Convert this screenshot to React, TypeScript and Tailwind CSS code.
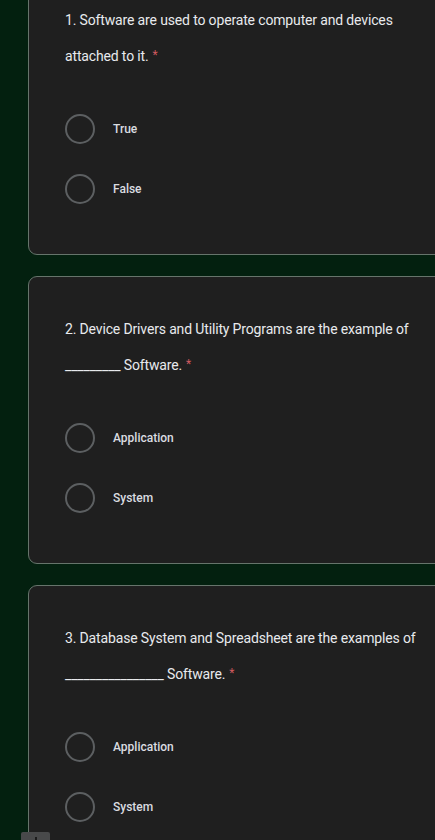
import React from "react";

type Q = { q1: string; q2: React.ReactNode; opts: string[] };

const questions: Q[] = [
  {
    q1: "1. Software are used to operate computer and devices",
    q2: <>attached to it.</>,
    opts: ["True", "False"],
  },
  {
    q1: "2. Device Drivers and Utility Programs are the example of",
    q2: <>_________ Software.</>,
    opts: ["Application", "System"],
  },
  {
    q1: "3. Database System and Spreadsheet are the examples of",
    q2: <>________________ Software.</>,
    opts: ["Application", "System"],
  },
];

function Card({ q }: { q: Q }) {
  return (
    <div className="w-[420px] shrink-0 rounded-[9px] border border-[#66746b] bg-[#1f1f1f] pl-[36px] pt-[34px] pb-[35px]">
      <div
        className="text-[14px] leading-[36px] tracking-[-0.15px] text-[#e8eaed]"
        style={{ fontFamily: 'Roboto, "Open Sans", sans-serif' }}
      >
        <div className="h-[36px] whitespace-nowrap">{q.q1}</div>
        <div className="h-[36px] whitespace-nowrap">
          {q.q2}
          <span className="relative top-[-2px] ml-[4px] text-[12px] leading-none text-[#cf5a5f]">*</span>
        </div>
      </div>
      <div className="mt-[25px] flex flex-col">
        {q.opts.map((o) => (
          <div key={o} className="flex h-[60px] items-center">
            <div className="h-[30px] w-[30px] rounded-full border-2 border-[#5c5f61]" />
            <span
              className="ml-[18px] text-[12px] font-medium text-[#dadce0]"
              style={{ fontFamily: "Roboto, sans-serif" }}
            >
              {o}
            </span>
          </div>
        ))}
      </div>
    </div>
  );
}

export default function App() {
  return (
    <div className="relative h-[840px] w-[435px] overflow-hidden bg-[#03200f]">
      <div className="-mt-[33px] flex flex-col gap-[21px] pl-[28px]">
        {questions.map((q, i) => (
          <Card key={i} q={q} />
        ))}
      </div>
      <div className="absolute bottom-[-6px] left-[21px] flex h-[14px] w-[29px] justify-center rounded-[2px] bg-[#48494a] pt-[5px]">
        <div className="h-[3px] w-[2px] bg-[#1c1c1c]" />
      </div>
    </div>
  );
}
